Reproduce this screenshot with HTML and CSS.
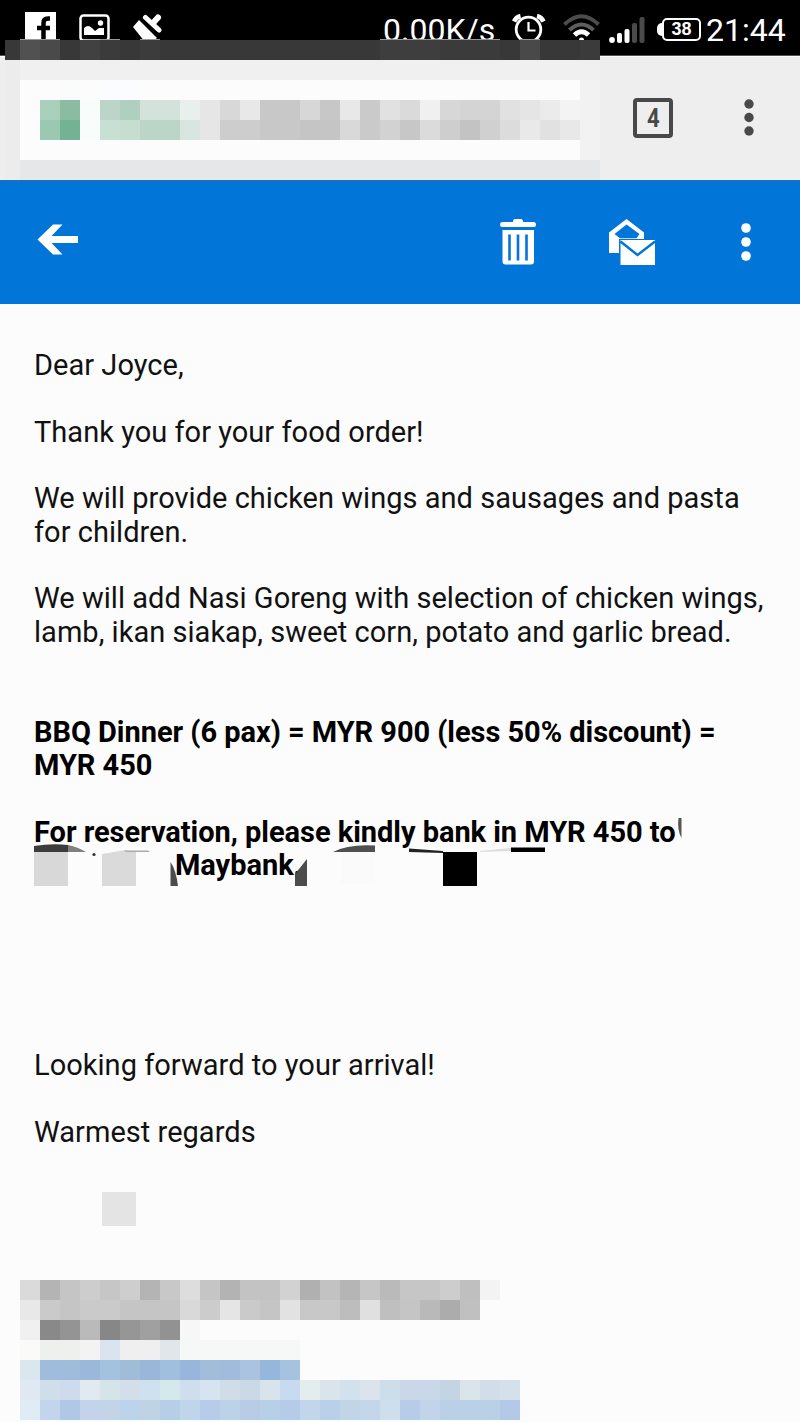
FILE: index.html
```html
<!DOCTYPE html>
<html lang="en">
<head>
    <meta charset="UTF-8">
    <meta name="viewport" content="width=device-width, initial-scale=1.0">
    <title>Mail</title>

    <link rel="stylesheet" href="styles.css">
</head>

<body>

    <!-- status bar -->
    <div class="status">
        <svg class="fb" width="31" height="31" viewBox="0 0 31 31">
            <rect width="31" height="31" fill="#fff"/>
            <path d="M25 6.500h-2q-4.500 0-4.500 4.500v20M12 16h13" fill="none" stroke="#000" stroke-width="4.500"/>
        </svg>
        <svg class="photo" width="32" height="28" viewBox="0 0 32 28">
            <rect x="1.500" y="1.500" width="28" height="25" rx="3" fill="none" stroke="#fff" stroke-width="2.500"/>
            <path d="M5 21v-7q4-4 8 0l3 3 4-3h5v7z" fill="#fff"/>
            <circle cx="21.500" cy="9" r="2.700" fill="#fff"/>
        </svg>
        <svg class="brush" width="30" height="28" viewBox="0 0 30 28">
            <path d="M0 13L6 6L24 24L19 28H12Z" fill="#fff"/>
            <path d="M12.500 3.500L26 16" stroke="#fff" stroke-width="5" stroke-linecap="round"/>
            <path d="M20 9L25 3.500" stroke="#fff" stroke-width="6" stroke-linecap="round"/>
        </svg>
        <span class="speed">0.00K/s</span>
        <svg class="alarm" width="34" height="30" viewBox="0 0 34 30">
            <circle cx="16.500" cy="15.500" r="12.300" fill="none" stroke="#fff" stroke-width="2.800"/>
            <path d="M2 7.500Q4 3 8.500 2M25 2Q29.500 3 31.500 7.500" fill="none" stroke="#fff" stroke-width="4.500"/>
            <path d="M16.500 8v8.500h7" fill="none" stroke="#fff" stroke-width="2.200"/>
        </svg>
        <svg class="wifi" width="37" height="30" viewBox="0 0 37 30">
            <path d="M1.500 10.500Q18.500-6 35.500 10.500" fill="none" stroke="#4c4c4c" stroke-width="4"/>
            <path d="M6.500 16Q18.500 5 30.500 16" fill="none" stroke="#5e5e5e" stroke-width="4"/>
            <path d="M11.500 21Q18.500 14.500 25.500 21" fill="none" stroke="#fff" stroke-width="5"/>
            <circle cx="18.500" cy="26" r="2.500" fill="#fff"/>
        </svg>
        <svg class="signal" width="36" height="27" viewBox="0 0 36 27">
            <circle cx="3" cy="23" r="2.900" fill="#fff"/>
            <rect x="8" y="16" width="5" height="10" rx="2" fill="#fff"/>
            <rect x="15.500" y="12" width="5" height="14" rx="2" fill="#fff"/>
            <rect x="23" y="6" width="5" height="20" rx="2" fill="#4a4a4a"/>
            <rect x="30.500" y="0" width="5" height="26" rx="2" fill="#4a4a4a"/>
        </svg>
        <div class="battery">38</div>
        <span class="clock">21:44</span>
    </div>

    <!-- browser bar -->
    <div class="browser">
        <div class="address"></div>
        <div class="tabs"><span>4</span></div>
        <svg class="menu" width="10" height="38" viewBox="0 0 10 38">
            <g fill="#494949"><circle cx="5" cy="5" r="4.700"/><circle cx="5" cy="18.500" r="4.700"/><circle cx="5" cy="32" r="4.700"/></g>
        </svg>
    </div>

    <!-- mosaic lying over the status bar and the address bar -->
    <svg class="mosaic-top" width="595" height="141" viewBox="5 39 595 141" shape-rendering="crispEdges">
        <path d="M20 39h40v1h-40zM100 39h20v1h-20zM140 39h20v1h-20zM380 39h120v1h-120zM520 39h20v1h-20z" fill="#999"/>
        <rect x="5" y="40" width="595" height="20" fill="#383838"/>
        <rect x="20" y="40" width="20" height="20" fill="#515151"/>
        <rect x="40" y="40" width="20" height="20" fill="#4a4a4a"/>
        <rect x="80" y="40" width="20" height="20" fill="#414141"/>
        <rect x="100" y="40" width="20" height="20" fill="#3b3b3b"/>
        <rect x="140" y="40" width="20" height="20" fill="#3c3c3c"/>
        <rect x="380" y="40" width="60" height="20" fill="#3e3e3e"/>
        <rect x="440" y="40" width="60" height="20" fill="#3b3b3b"/>
        <rect x="520" y="40" width="20" height="20" fill="#494949"/>
        <rect x="580" y="40" width="20" height="20" fill="#3b3b3b"/>
        <rect x="5" y="60" width="595" height="120" fill="#f0f0f0"/>
        <rect x="5" y="60" width="15" height="120" fill="#ececec"/>
        <rect x="20" y="80" width="560" height="80" fill="#fcfcfc"/>
        <rect x="580" y="80" width="20" height="80" fill="#f2f2f2"/>
        <rect x="20" y="160" width="580" height="20" fill="#e6e7e9"/>
        <rect x="60" y="80" width="20" height="20" fill="#f9fcfb"/>
        <rect x="100" y="80" width="40" height="20" fill="#fafcff"/>
        <rect x="40" y="100" width="20" height="20" fill="#a8d0bd"/>
        <rect x="60" y="100" width="20" height="20" fill="#8abca2"/>
        <rect x="40" y="120" width="20" height="20" fill="#9bc8b0"/>
        <rect x="60" y="120" width="20" height="20" fill="#73b292"/>
        <rect x="80" y="100" width="20" height="40" fill="#f8fcfa"/>
        <rect x="100" y="100" width="20" height="20" fill="#bbd6c8"/>
        <rect x="120" y="100" width="20" height="20" fill="#afd0bf"/>
        <rect x="140" y="100" width="40" height="20" fill="#d4e2dc"/>
        <rect x="180" y="100" width="20" height="20" fill="#e8efed"/>
        <rect x="200" y="100" width="20" height="40" fill="#e6e6e6"/>
        <rect x="220" y="100" width="20" height="20" fill="#d8d8d8"/>
        <rect x="240" y="100" width="20" height="20" fill="#e8e8e8"/>
        <rect x="100" y="120" width="20" height="20" fill="#c8e0d3"/>
        <rect x="120" y="120" width="20" height="20" fill="#c5decf"/>
        <rect x="140" y="120" width="40" height="20" fill="#bbd6c8"/>
        <rect x="180" y="120" width="20" height="20" fill="#d9e5e1"/>
        <rect x="220" y="120" width="40" height="20" fill="#cdcdcd"/>
        <rect x="260" y="100" width="40" height="40" fill="#c8c8c8"/>
        <rect x="300" y="100" width="20" height="20" fill="#d7d7d7"/>
        <rect x="320" y="100" width="20" height="20" fill="#c7c7c7"/>
        <rect x="340" y="100" width="20" height="20" fill="#e8e8e8"/>
        <rect x="360" y="100" width="20" height="40" fill="#cacaca"/>
        <rect x="380" y="100" width="20" height="20" fill="#e1e1e1"/>
        <rect x="400" y="100" width="20" height="20" fill="#dadada"/>
        <rect x="420" y="100" width="20" height="20" fill="#f0f0f0"/>
        <rect x="440" y="100" width="20" height="20" fill="#d7d7d7"/>
        <rect x="460" y="100" width="40" height="20" fill="#d4d4d4"/>
        <rect x="500" y="100" width="20" height="20" fill="#e1e1e1"/>
        <rect x="520" y="100" width="20" height="20" fill="#e5e5e5"/>
        <rect x="540" y="100" width="20" height="20" fill="#ebebeb"/>
        <rect x="560" y="100" width="20" height="20" fill="#f3f3f3"/>
        <rect x="300" y="120" width="40" height="20" fill="#c5c5c5"/>
        <rect x="340" y="120" width="20" height="20" fill="#d9d9d9"/>
        <rect x="380" y="120" width="20" height="20" fill="#d2d2d2"/>
        <rect x="400" y="120" width="20" height="20" fill="#c7c7c7"/>
        <rect x="420" y="120" width="20" height="20" fill="#dbdbdb"/>
        <rect x="440" y="120" width="20" height="20" fill="#cecece"/>
        <rect x="460" y="120" width="20" height="20" fill="#c3c3c3"/>
        <rect x="480" y="120" width="20" height="20" fill="#d0d0d0"/>
        <rect x="500" y="120" width="20" height="20" fill="#dcdcdc"/>
        <rect x="520" y="120" width="20" height="20" fill="#e9e9e9"/>
        <rect x="540" y="120" width="20" height="20" fill="#e1e1e1"/>
        <rect x="560" y="120" width="20" height="20" fill="#e8e8e8"/>
    </svg>

    <!-- mail toolbar -->
    <div class="toolbar">
        <svg class="back" width="42" height="32" viewBox="0 0 42 32">
            <path d="M0.500 15.500L16 0.500H25.500L14.500 12H41V19H14.500L25.500 30.500H16Z" fill="#fff"/>
        </svg>
        <svg class="trash" width="36" height="47" viewBox="0 0 36 47">
            <path d="M13 4q0-3 2-3h6q2 0 2 3h11q2 0 2 2.500t-2 2.500H2Q0 9 0 6.500T2 4z" fill="#fff"/>
            <path d="M2.500 12H34V43.500q0 3-3 3H5.500q-3 0-3-3z" fill="#fff"/>
            <path d="M9.500 16.500v26M18 16.500v26M26.500 16.500v26" stroke="#0474d8" stroke-width="2.600"/>
        </svg>
        <svg class="mails" width="47" height="47" viewBox="0 0 47 47">
            <path d="M0 34V13.500L17.500 0L35 13.500V20H10V34Z" fill="#fff"/>
            <path d="M5.500 15L17.500 5.500L30.500 15L27.500 19.200H11Z" fill="#0275d8"/>
            <path d="M11.500 21H46V46H11.500Z" fill="#fff"/>
            <path d="M11.500 22.500L28.500 36L46 22.500" fill="none" stroke="#0275d8" stroke-width="2.400"/>
        </svg>
        <svg class="more" width="10" height="38" viewBox="0 0 10 38">
            <g fill="#fff"><circle cx="5" cy="5" r="4.800"/><circle cx="5" cy="19" r="4.800"/><circle cx="5" cy="33" r="4.800"/></g>
        </svg>
    </div>

    <!-- mail text -->
    <div class="mail">
        <p>Dear Joyce,</p>
        <p>Thank you for your food order!</p>
        <p>We will provide chicken wings and sausages and pasta<br>for children.</p>
        <p>We will add Nasi Goreng with selection of chicken wings,<br>lamb, ikan siakap, sweet corn, potato and garlic bread.</p>
        <p class="bold price">BBQ Dinner (6 pax) = MYR 900 (less 50% discount) =<br>MYR 450</p>
        <div class="bank">
            <p class="bold">For reservation, please kindly bank in MYR 450 to<br><span class="maybank">Maybank.</span></p>
            <!-- what is left round the erased account details -->
            <svg class="marks" width="660" height="76" viewBox="30 814 660 76">
                <path d="M34 852V846Q52 843 68 845V852Z" fill="#3c3c3c"/>
                <path d="M68 845Q78 847 86 852H68Z" fill="#808080"/>
                <rect x="34" y="852" width="34" height="34" fill="#d8d8d8"/>
                <circle cx="94" cy="854.500" r="1.600" fill="#333"/>
                <path d="M102 854L125 850L136 852V886H102Z" fill="#dadada"/>
                <path d="M124 850.500H148L150 852H126Z" fill="#aaa"/>
                <path d="M170.500 886V862Q176 870 178 886Z" fill="#4c4c4c"/>
                <path d="M295 886V874L307 859V886Z" fill="#4c4c4c"/>
                <path d="M333 852Q348 844 375 845.500V852Z" fill="#505050"/>
                <rect x="341" y="852" width="34" height="32" fill="#fafafa"/>
                <path d="M409 848.500L443 851V853L409 852Z" fill="#222"/>
                <path d="M480 851L511 848V851L480 852Z" fill="#ddd"/>
                <rect x="511" y="847.500" width="34" height="4.500" fill="#000"/>
                <rect x="443" y="852" width="34" height="34" fill="#000"/>
                <path d="M678.500 818H681.500V838Q677 830 678.500 818Z" fill="#555"/>
            </svg>
        </div>
        <p>Looking forward to your arrival!</p>
        <p>Warmest regards</p>
        <div class="square"></div>

        <!-- signature -->
        <svg class="signature" width="500" height="142" viewBox="20 1280 500 142" shape-rendering="crispEdges">
            <rect x="20" y="1280" width="20" height="20" fill="#dadada"/>
            <rect x="40" y="1280" width="20" height="20" fill="#b4b4b4"/>
            <rect x="60" y="1280" width="20" height="20" fill="#c5c5c5"/>
            <rect x="80" y="1280" width="20" height="20" fill="#cdcdcd"/>
            <rect x="100" y="1280" width="20" height="20" fill="#c6c6c6"/>
            <rect x="120" y="1280" width="20" height="20" fill="#cecece"/>
            <rect x="140" y="1280" width="20" height="20" fill="#b4b4b4"/>
            <rect x="160" y="1280" width="20" height="20" fill="#c8c8c8"/>
            <rect x="180" y="1280" width="20" height="20" fill="#dddddd"/>
            <rect x="200" y="1280" width="20" height="20" fill="#c5c5c5"/>
            <rect x="220" y="1280" width="20" height="20" fill="#b3b3b3"/>
            <rect x="240" y="1280" width="40" height="20" fill="#c3c3c3"/>
            <rect x="280" y="1280" width="20" height="20" fill="#d2d2d2"/>
            <rect x="300" y="1280" width="20" height="20" fill="#b0b0b0"/>
            <rect x="320" y="1280" width="20" height="20" fill="#c2c2c2"/>
            <rect x="340" y="1280" width="20" height="20" fill="#b5b5b5"/>
            <rect x="360" y="1280" width="20" height="20" fill="#c6c6c6"/>
            <rect x="380" y="1280" width="20" height="20" fill="#bababa"/>
            <rect x="400" y="1280" width="40" height="20" fill="#c6c6c6"/>
            <rect x="440" y="1280" width="20" height="20" fill="#cdcdcd"/>
            <rect x="460" y="1280" width="20" height="20" fill="#bfbfbf"/>
            <rect x="480" y="1280" width="20" height="20" fill="#f3f3f3"/>

            <rect x="20" y="1300" width="20" height="20" fill="#e8e8e8"/>
            <rect x="40" y="1300" width="20" height="20" fill="#cacaca"/>
            <rect x="60" y="1300" width="20" height="20" fill="#c5c5c5"/>
            <rect x="80" y="1300" width="40" height="20" fill="#cacaca"/>
            <rect x="120" y="1300" width="60" height="20" fill="#c5c5c5"/>
            <rect x="180" y="1300" width="20" height="20" fill="#d9d9d9"/>
            <rect x="200" y="1300" width="20" height="20" fill="#cccccc"/>
            <rect x="220" y="1300" width="20" height="20" fill="#e5e5e5"/>
            <rect x="240" y="1300" width="20" height="20" fill="#cacaca"/>
            <rect x="260" y="1300" width="20" height="20" fill="#c5c5c5"/>
            <rect x="280" y="1300" width="20" height="20" fill="#e2e2e2"/>
            <rect x="300" y="1300" width="40" height="20" fill="#c8c8c8"/>
            <rect x="340" y="1300" width="20" height="20" fill="#bdbdbd"/>
            <rect x="360" y="1300" width="20" height="20" fill="#e0e0e0"/>
            <rect x="380" y="1300" width="20" height="20" fill="#bfbfbf"/>
            <rect x="400" y="1300" width="20" height="20" fill="#c5c5c5"/>
            <rect x="420" y="1300" width="20" height="20" fill="#b9b9b9"/>
            <rect x="440" y="1300" width="20" height="20" fill="#acacac"/>
            <rect x="460" y="1300" width="20" height="20" fill="#c0c0c0"/>

            <rect x="20" y="1320" width="20" height="20" fill="#f0f0f0"/>
            <rect x="40" y="1320" width="20" height="20" fill="#898989"/>
            <rect x="60" y="1320" width="20" height="20" fill="#949494"/>
            <rect x="80" y="1320" width="20" height="20" fill="#bababa"/>
            <rect x="100" y="1320" width="20" height="20" fill="#878787"/>
            <rect x="120" y="1320" width="20" height="20" fill="#969696"/>
            <rect x="140" y="1320" width="20" height="20" fill="#a0a0a0"/>
            <rect x="160" y="1320" width="20" height="20" fill="#929292"/>
            <rect x="180" y="1320" width="20" height="20" fill="#f7f7f7"/>

            <rect x="20" y="1340" width="20" height="20" fill="#fafbf8"/>
            <rect x="40" y="1340" width="40" height="20" fill="#eef0ee"/>
            <rect x="80" y="1340" width="20" height="20" fill="#f3f3f4"/>
            <rect x="100" y="1340" width="20" height="20" fill="#dae4ee"/>
            <rect x="120" y="1340" width="40" height="20" fill="#efefef"/>
            <rect x="160" y="1340" width="20" height="20" fill="#e0e6e9"/>
            <rect x="180" y="1340" width="120" height="20" fill="#f5f8f7"/>

            <rect x="20" y="1360" width="20" height="20" fill="#dae7ef"/>
            <rect x="40" y="1360" width="20" height="20" fill="#9fbcdc"/>
            <rect x="60" y="1360" width="20" height="20" fill="#9fbddb"/>
            <rect x="80" y="1360" width="20" height="20" fill="#9bb8da"/>
            <rect x="100" y="1360" width="20" height="20" fill="#a3c2df"/>
            <rect x="120" y="1360" width="20" height="20" fill="#9fbcd9"/>
            <rect x="140" y="1360" width="20" height="20" fill="#9ab6d9"/>
            <rect x="160" y="1360" width="20" height="20" fill="#a0bfdf"/>
            <rect x="180" y="1360" width="20" height="20" fill="#98b5dc"/>
            <rect x="200" y="1360" width="20" height="20" fill="#a1bdd9"/>
            <rect x="220" y="1360" width="20" height="20" fill="#a1bbdc"/>
            <rect x="240" y="1360" width="20" height="20" fill="#a9c3e0"/>
            <rect x="260" y="1360" width="20" height="20" fill="#96b7dc"/>
            <rect x="280" y="1360" width="20" height="20" fill="#a7c2df"/>

            <rect x="20" y="1380" width="20" height="20" fill="#e0e9f3"/>
            <rect x="40" y="1380" width="20" height="20" fill="#cedfeb"/>
            <rect x="60" y="1380" width="20" height="20" fill="#cddbec"/>
            <rect x="80" y="1380" width="20" height="20" fill="#e1e9f1"/>
            <rect x="100" y="1380" width="20" height="20" fill="#d4e4e8"/>
            <rect x="120" y="1380" width="20" height="20" fill="#d2dfea"/>
            <rect x="140" y="1380" width="20" height="20" fill="#cfe0ef"/>
            <rect x="160" y="1380" width="20" height="20" fill="#d5e8ec"/>
            <rect x="180" y="1380" width="20" height="20" fill="#cedeec"/>
            <rect x="200" y="1380" width="20" height="20" fill="#d6e3f0"/>
            <rect x="220" y="1380" width="20" height="20" fill="#d0dde9"/>
            <rect x="240" y="1380" width="20" height="20" fill="#cad9e6"/>
            <rect x="260" y="1380" width="20" height="20" fill="#d9e3ec"/>
            <rect x="280" y="1380" width="20" height="20" fill="#c8daf0"/>
            <rect x="300" y="1380" width="20" height="20" fill="#e4edee"/>
            <rect x="320" y="1380" width="20" height="20" fill="#d9e4ec"/>
            <rect x="340" y="1380" width="20" height="20" fill="#d2e1ec"/>
            <rect x="360" y="1380" width="20" height="20" fill="#dbe4ed"/>
            <rect x="380" y="1380" width="20" height="20" fill="#cbdeea"/>
            <rect x="400" y="1380" width="40" height="20" fill="#cad7e8"/>
            <rect x="440" y="1380" width="20" height="20" fill="#c4d4e2"/>
            <rect x="460" y="1380" width="20" height="20" fill="#dae5eb"/>
            <rect x="480" y="1380" width="20" height="20" fill="#d1dde9"/>
            <rect x="500" y="1380" width="20" height="20" fill="#d4e1ea"/>

            <rect x="20" y="1400" width="20" height="20" fill="#dfecf3"/>
            <rect x="40" y="1400" width="20" height="20" fill="#c2d5ec"/>
            <rect x="60" y="1400" width="20" height="20" fill="#b0c8e6"/>
            <rect x="80" y="1400" width="20" height="20" fill="#c3d3ea"/>
            <rect x="100" y="1400" width="20" height="20" fill="#c2d4e6"/>
            <rect x="120" y="1400" width="20" height="20" fill="#bcd4eb"/>
            <rect x="140" y="1400" width="20" height="20" fill="#c0d3e4"/>
            <rect x="160" y="1400" width="20" height="20" fill="#b6cee6"/>
            <rect x="180" y="1400" width="20" height="20" fill="#c0d5eb"/>
            <rect x="200" y="1400" width="20" height="20" fill="#b6cce9"/>
            <rect x="220" y="1400" width="20" height="20" fill="#bcd2e8"/>
            <rect x="240" y="1400" width="20" height="20" fill="#b8cce6"/>
            <rect x="260" y="1400" width="20" height="20" fill="#b8cfe8"/>
            <rect x="280" y="1400" width="20" height="20" fill="#b5cbe8"/>
            <rect x="300" y="1400" width="20" height="20" fill="#c1d6eb"/>
            <rect x="320" y="1400" width="20" height="20" fill="#bad0e8"/>
            <rect x="340" y="1400" width="20" height="20" fill="#c1d5e7"/>
            <rect x="360" y="1400" width="20" height="20" fill="#c4d6e9"/>
            <rect x="380" y="1400" width="20" height="20" fill="#cddeed"/>
            <rect x="400" y="1400" width="20" height="20" fill="#b6cce9"/>
            <rect x="420" y="1400" width="20" height="20" fill="#c1d4ea"/>
            <rect x="440" y="1400" width="60" height="20" fill="#bad0e6"/>
            <rect x="500" y="1400" width="20" height="20" fill="#b3c9e8"/>
        </svg>
    </div>

</body>
</html>
```

FILE: styles.css
```css
*
{
    box-sizing: border-box;
}

body
{
    margin: 0; width: 800px; height: 1422px; overflow: hidden;
    position: relative; background-color: #fcfcfc;
    font-family: Roboto, "Liberation Sans", sans-serif;
}

svg { display: block; flex: none; }

/* status bar */
.status
{
    display: flex; align-items: flex-start; height: 56px;
    padding-left: 25px; background-color: #000; color: #fff;
    border-bottom: 1px solid #555;
}

.fb { margin-top: 12px; }
.photo { margin-top: 14px; margin-left: 54px; margin-left: 23px; }
.brush { margin-top: 14px; margin-left: 22px; }

.speed
{
    width: 118px; margin-left: 220px; margin-top: 11px;
    font-size: 32px; line-height: 38px;
}

.alarm { margin-top: 14px; margin-left: 11px; }
.wifi { margin-top: 14px; margin-left: 17px; }
.signal { margin-top: 17px; margin-left: 9px; }

.battery
{
    width: 39px; height: 23px; margin-top: 18px; margin-left: 17px;
    border: 2.5px solid #fff; border-radius: 5px; position: relative;
    font-family: "Liberation Sans", sans-serif; font-size: 18px;
    font-weight: bold; line-height: 19px; text-align: center;
}

.battery::before
{
    content: ""; position: absolute; left: -7px; top: 3px;
    width: 6px; height: 13px; background-color: #fff; border-radius: 5px 0 0 5px;
}

.clock
{
    margin-left: 5px; margin-top: 11px;
    font-size: 32px; line-height: 38px;
}

/* browser bar */
.browser
{
    display: flex; height: 125px; background-color: #eee;
    border-top: 1px solid #fff; border-bottom: 1px solid #2a6cae;
}

.address { width: 600px; }

.tabs
{
    width: 40px; height: 40px; margin-top: 41px; margin-left: 33px;
    border: 4px solid #484848; border-radius: 4px;
    font-size: 26px; font-weight: bold; line-height: 33px;
    text-align: center; color: #484848;
}

.tabs span { display: inline-block; transform: scaleX(0.85); }

.menu { margin-top: 42px; margin-left: 71px; }

.mosaic-top { position: absolute; left: 5px; top: 39px; }

/* mail toolbar */
.toolbar
{
    display: flex; height: 123px; padding-left: 37px;
    background-color: #0275d8;
}

.back { margin-top: 43px; }
.trash { margin-top: 37px; margin-left: 421px; }
.mails { margin-top: 38px; margin-left: 73px; }
.more { margin-top: 42px; margin-left: 85px; }

/* mail text */
.mail
{
    padding: 45px 0 0 34px; font-size: 29px; line-height: 33.33px;
    letter-spacing: 0.03px; color: #111; white-space: nowrap;
}

.mail p { margin: 0 0 33.33px; }
.mail .bold { font-weight: bold; letter-spacing: -0.04px; color: #000; }
.mail .price { margin-top: 66.66px; }

.bank { position: relative; height: 233.3px; }
.maybank { margin-left: 141px; }
.marks { position: absolute; left: -4px; top: -2px; }

.square
{
    width: 34px; height: 34px; margin-left: 68px; margin-top: 43px;
    background-color: #e4e4e4;
}

.signature { margin-left: -14px; margin-top: 54px; }
```
